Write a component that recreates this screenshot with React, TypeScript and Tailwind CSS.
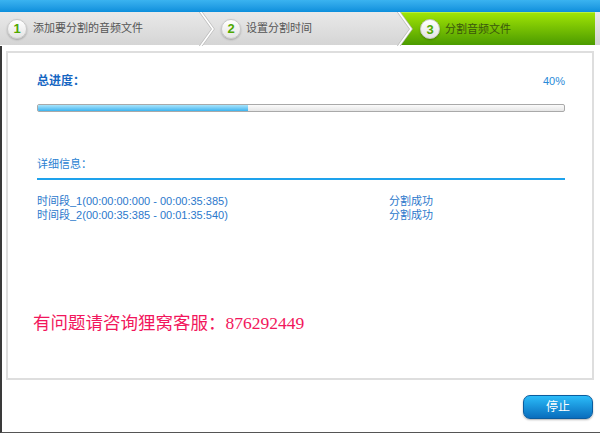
const uiFont = { fontFamily: '"Liberation Sans", "Noto Sans CJK SC", sans-serif' };

const segments = [
  { label: "时间段_1(00:00:00:000 - 00:00:35:385)", status: "分割成功" },
  { label: "时间段_2(00:00:35:385 - 00:01:35:540)", status: "分割成功" },
];

function StepBadge({ n }: { n: number }) {
  return (
    <div className="flex h-[20px] w-[20px] shrink-0 items-center justify-center rounded-full border border-[#c8c8c8] bg-gradient-to-b from-white to-[#e4e4e4] shadow-[0_1px_2px_rgba(0,0,0,0.25)]">
      <span className="text-[13px] font-bold leading-none text-[#4fa800]">{n}</span>
    </div>
  );
}

function Chevron() {
  return (
    <svg
      className="pointer-events-none absolute right-[-15px] top-0 z-10"
      width="16"
      height="34"
      viewBox="0 0 16 34"
    >
      <polyline points="1,-1 14,17 1,35" fill="none" stroke="#bdbdbd" strokeWidth="3" />
      <polyline points="1,-1 14,17 1,35" fill="none" stroke="#ffffff" strokeWidth="1.6" />
    </svg>
  );
}

export default function App() {
  return (
    <div className="flex h-[433px] w-[600px] flex-col overflow-hidden bg-white" style={uiFont}>
      {/* top strip */}
      <div className="h-[12px] bg-gradient-to-b from-[#3ab3f0] to-[#0a8fdc]" />

      {/* wizard steps */}
      <div className="flex h-[34px] border-b border-white bg-gradient-to-b from-[#e9e9e9] to-[#d5d5d5] pr-[5px]">
        <div className="relative flex w-[200px] items-center gap-[6px] pl-[7px]">
          <StepBadge n={1} />
          <span className="text-[11px] text-[#555]">添加要分割的音频文件</span>
          <Chevron />
        </div>
        <div className="relative flex w-[198px] items-center gap-[5px] pl-[21px]">
          <StepBadge n={2} />
          <span className="text-[11px] text-[#555]">设置分割时间</span>
          <Chevron />
        </div>
        <div className="flex flex-1 items-center gap-[5px] border-t border-[#b8f040] bg-gradient-to-b from-[#9fe406] to-[#4b9b00] pl-[22px] [clip-path:polygon(0_0,100%_0,100%_100%,0_100%,14px_50%)]">
          <StepBadge n={3} />
          <span className="text-[11px] text-[#3a560c]">分割音频文件</span>
        </div>
      </div>

      {/* body */}
      <div className="flex flex-1 flex-col border-b border-l-2 border-b-[#555] border-l-[#3a3a3a] pr-[6px]">
        <div className="ml-[4px] mt-[5px] h-[329px] border-2 border-[#dedede] pb-[10px] pl-[29px] pr-[27px] pt-[20px]">
          <div className="flex h-[16px] items-center justify-between">
            <span className="text-[12px] font-bold text-[#1566c2]">总进度：</span>
            <span className="text-[11px] text-[#2a8ad8]">40%</span>
          </div>

          <div className="mt-[15px] h-[8px] overflow-hidden rounded-[2px] border border-[#a9a9a9] bg-gradient-to-b from-[#fbfbfb] to-[#e6e6e6]">
            <div
              className="h-full bg-gradient-to-b from-[#a6e4fc] to-[#38b4ef]"
              style={{ width: "40%" }}
            />
          </div>

          <div className="mt-[44px] flex h-[16px] items-center">
            <span className="text-[11px] text-[#2a7fd2]">详细信息：</span>
          </div>
          <div className="mt-[6px] h-[2px] bg-[#1ea2ec]" />

          <div className="mt-[14px] flex flex-col">
            {segments.map((s) => (
              <div key={s.label} className="flex h-[14px] items-center text-[11px] text-[#2b78cc]">
                <span className="w-[352px]">{s.label}</span>
                <span>{s.status}</span>
              </div>
            ))}
          </div>

          <div
            className="-ml-[4px] mt-[89px] flex h-[24px] items-center text-[17.5px] text-[#f2165c]"
            style={{ fontFamily: '"Liberation Serif", "Noto Sans CJK SC", serif' }}
          >
            有问题请咨询狸窝客服：876292449
          </div>
        </div>

        <div className="mt-[15px] flex justify-end pr-[1px]">
          <button className="flex h-[24px] w-[70px] items-center justify-center rounded-[7px] border border-[#0b5c9e] bg-gradient-to-b from-[#2cbcf9] to-[#0a6dbd] text-[12px] text-white shadow-[0_1px_2px_rgba(0,0,0,0.3)]">
            停止
          </button>
        </div>
      </div>
    </div>
  );
}
